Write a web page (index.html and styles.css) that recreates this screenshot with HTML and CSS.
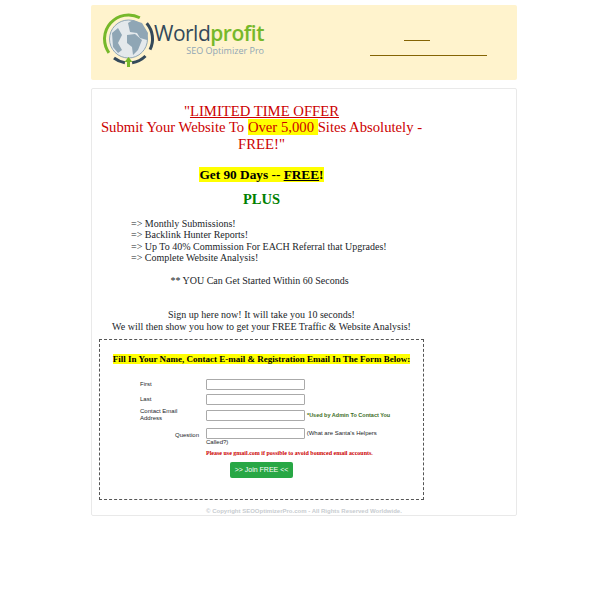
FILE: index.html
```html
<!DOCTYPE html>
<html lang="en">
<head>
<meta charset="utf-8">
<title>Worldprofit SEO Optimizer Pro</title>
<link rel="stylesheet" href="styles.css">
</head>
<body>
<div class="page">
  <header class="banner">
    <div class="logo">
      <svg class="logo-mark" width="52" height="56" viewBox="0 0 52 56">
        <circle cx="25.500" cy="26" r="19" fill="#e4e9ec" stroke="#8fa6b5"/>
        <path d="M25 10l5-3 9 3 6 10-1 7-7-2-3-5-7-1z" fill="#8fa6b5"/>
        <path d="M24 22l8-1 7 6-4 10-5 5-1-8-5-4z" fill="#8fa6b5"/>
        <path d="M9 20l6-5 4 7-4 8 4 7-4 3-5-6z" fill="#8fa6b5"/>
        <path d="M5.900 39.800 A24 24 0 0 1 36.800 4.800" fill="none" stroke="#76b82a" stroke-width="3"/>
        <path d="M43.700 10.300 A24 24 0 0 1 47 36.700" fill="none" stroke="#34495a" stroke-width="3"/>
        <path d="M11 45 A24 24 0 0 0 21.900 49.700" fill="none" stroke="#34495a" stroke-width="3"/>
        <path d="M29.100 49.700 A24 24 0 0 0 42.500 43" fill="none" stroke="#34495a" stroke-width="3"/>
        <path d="M25.500 44l4 5H27v5h-3v-5h-2.500z" fill="#76b82a"/>
      </svg>
      <div class="logo-text">
        <div class="logo-name">World<span class="logo-accent">profit</span></div>
        <div class="logo-sub">SEO Optimizer Pro</div>
      </div>
    </div>
    <div class="banner-links">
      <a class="rule rule-short" href="#" aria-label="Login"></a>
      <a class="rule rule-long" href="#" aria-label="Sign up"></a>
    </div>
  </header>

  <main class="card">
    <div class="content">
      <h1 class="offer">"<u>LIMITED TIME OFFER</u><br>Submit Your Website To <mark>Over 5,000 </mark>Sites Absolutely - FREE!"</h1>
      <p class="days"><mark>Get 90 Days -- <u>FREE</u>!</mark></p>
      <p class="plus">PLUS</p>
      <ul class="perks">
        <li>=&gt; Monthly Submissions!</li>
        <li>=&gt; Backlink Hunter Reports!</li>
        <li>=&gt; Up To 40% Commission For EACH Referral that Upgrades!</li>
        <li>=&gt; Complete Website Analysis!</li>
      </ul>
      <p class="started">** YOU Can Get Started Within 60 Seconds</p>
      <p class="signup">Sign up here now! It will take you 10 seconds!<br>We will then show you how to get your FREE Traffic &amp; Website Analysis!</p>
      <form class="form-box">
        <p class="form-title"><mark>Fill In Your Name, Contact E-mail &amp; Registration Email In The Form Below:</mark></p>
        <div class="row"><label class="lbl">First</label><input class="field" type="text"></div>
        <div class="row"><label class="lbl">Last</label><input class="field" type="text"></div>
        <div class="row row-email"><label class="lbl">Contact Email Address</label><input class="field" type="text"><span class="note">*Used by Admin To Contact You</span></div>
        <div class="row row-q"><label class="lbl lbl-right">Question</label>
          <div class="q-body"><input class="field" type="text"> (What are Santa's Helpers Called?)</div>
        </div>
        <p class="warn">Please use gmail.com if possible to avoid bounced email accounts.</p>
        <div class="submit-row"><button class="join" type="button">&gt;&gt; Join FREE &lt;&lt;</button></div>
      </form>
      <p class="copy">© Copyright SEOOptimizerPro.com - All Rights Reserved Worldwide.</p>
    </div>
  </main>
</div>
</body>
</html>
```

FILE: styles.css
```css
* { box-sizing: border-box; }
html, body { margin: 0; padding: 0; background: #fff; }
body { font-family: "Liberation Serif", serif; color: #212529; }
.page { width: 426px; margin: 5px 0 0 91px; }

.banner { height: 75px; background: #fff3cd; border-radius: 2px; display: flex; }
.logo { display: flex; padding: 8px 0 0 12px; width: 279px; }
.logo-mark { flex: none; }
.logo-text { margin-left: -4px; padding-top: 8px; width: 113px; text-align: right; }
.logo-name { font: 21px/24px "Open Sans", sans-serif; letter-spacing: -.5px; color: #34495a; white-space: nowrap; }
.logo-accent { color: #76b82a; font-weight: 600; }
.logo-sub { font: 9px/11px "Open Sans", sans-serif; color: #8fa6b5; margin-top: 0; white-space: nowrap; }
.banner-links { flex: 1; display: flex; flex-direction: column; padding-top: 35px; gap: 14px; }
.rule { display: block; height: 1px; background: #856404; }
.rule-short { width: 26px; margin-left: 34px; }
.rule-long { width: 117px; }

.card { margin-top: 8px; height: 428px; background: #fff; border: 1px solid #e9e9e9; border-radius: 2px; padding: 14px 0 0 7px; }
.content { width: 325px; text-align: center; }
.offer { margin: 0; font-size: 14.700px; line-height: 16.300px; font-weight: 400; color: #cc0000; }
mark { background: #ffff00; color: inherit; }
.days { margin: 15px 0 0; font-size: 13.300px; line-height: 16px; font-weight: 700; color: #000; }
.plus { margin: 8px 0 0; font-size: 14.500px; line-height: 17px; font-weight: 700; color: #008000; }
.perks { list-style: none; margin: 10px 0 0; padding: 0 0 0 32px; text-align: left; font-size: 10px; line-height: 11.500px; color: #212529; }
.started { margin: 11px 4px 0 0; font-size: 10px; line-height: 12px; }
.signup { margin: 22px -6px 0; font-size: 10px; line-height: 12.500px; }

.form-box { margin-top: 5px; height: 161px; border: 1px dashed #555; padding: 14px 0 0; font-family: "Liberation Sans", sans-serif; font-size: 6px; line-height: 7.500px; }
.form-title { margin: 0 0 12px; font: 700 9px/11px "Liberation Serif", serif; color: #000; }
.row { display: flex; align-items: center; height: 15px; text-align: left; }
.lbl { width: 50px; margin: 0 16px 0 40px; flex: none; }
.lbl-right { width: 65px; margin: 0 0 0 34px; text-align: right; }
.field { width: 99px; height: 11px; padding: 0; border: 1px solid #aaa; border-radius: 1px; background: #fff; flex: none; vertical-align: middle; }
.note { margin-left: 2px; font-weight: 700; font-size: 5.500px; color: #3c6e1e; white-space: nowrap; }
.row-email { height: 17px; }
.row-q { height: 21px; align-items: flex-start; margin-top: 4.500px; }
.row-q .lbl { padding-top: 4px; }
.q-body { width: 180px; margin-left: 7px; }
.warn { margin: 0 0 0 106px; font: 700 6px/9px "Liberation Serif", serif; color: #cc0000; text-align: left; }
.submit-row { text-align: left; padding: 4px 0 0 130px; }
.join { height: 16px; width: 63px; padding: 0; border: 0; border-radius: 2px; background: #28a745; color: #fff; font: 7px/16px "Liberation Sans", sans-serif; }
.copy { margin: 8px 0 0 -8px; width: 426px; font: 700 6px/7px "Liberation Sans", sans-serif; color: #c8ccd0; text-align: center; }
```
